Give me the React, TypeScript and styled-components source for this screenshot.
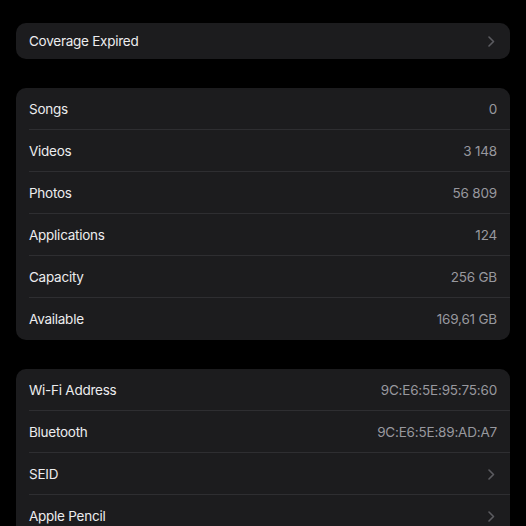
import styled, { createGlobalStyle } from "styled-components";

const Global = createGlobalStyle`
  body {
    margin: 0;
    background: #000;
    font-family: Inter, "Liberation Sans", sans-serif;
    -webkit-font-smoothing: antialiased;
  }
`;

const Page = styled.div`
  width: 526px;
  height: 526px;
  overflow: hidden;
  background: #000;
  padding: 23px 16px 0 16px;
  box-sizing: border-box;
  display: flex;
  flex-direction: column;
  gap: 29px;
`;

const Card = styled.div`
  background: #1c1c1e;
  border-radius: 10px;
  overflow: hidden;
  flex-shrink: 0;
`;

const Row = styled.div<{ $h?: number }>`
  height: ${(p) => p.$h ?? 42}px;
  display: flex;
  align-items: center;
  justify-content: space-between;
  padding-left: 13px;
  position: relative;
  &:not(:last-child)::after {
    content: "";
    position: absolute;
    left: 13px;
    right: 0;
    bottom: 0;
    height: 1px;
    background: #2e2e31;
  }
`;

const Label = styled.span`
  color: #ececee;
  font-size: 13.5px;
  letter-spacing: -0.25px;
  margin-top: -1px;
`;

const Value = styled.span`
  color: #98989e;
  font-size: 13.5px;
  padding-right: 13px;
  letter-spacing: -0.2px;
  margin-top: -1px;
`;

const Chevron = styled.svg`
  width: 7px;
  height: 11px;
  margin-right: 15px;
`;

function Arrow() {
  return (
    <Chevron viewBox="0 0 7 11">
      <path
        d="M1 1l4.5 4.5L1 10"
        fill="none"
        stroke="#5b5b60"
        strokeWidth="1.6"
        strokeLinecap="round"
        strokeLinejoin="round"
      />
    </Chevron>
  );
}

interface IItem {
  label: string;
  value?: string;
}

const stats: IItem[] = [
  { label: "Songs", value: "0" },
  { label: "Videos", value: "3 148" },
  { label: "Photos", value: "56 809" },
  { label: "Applications", value: "124" },
  { label: "Capacity", value: "256 GB" },
  { label: "Available", value: "169,61 GB" },
];

const network: IItem[] = [
  { label: "Wi-Fi Address", value: "9C:E6:5E:95:75:60" },
  { label: "Bluetooth", value: "9C:E6:5E:89:AD:A7" },
  { label: "SEID" },
  { label: "Apple Pencil" },
];

function Rows({ items }: { items: IItem[] }) {
  return (
    <>
      {items.map((item) => (
        <Row key={item.label}>
          <Label>{item.label}</Label>
          {item.value !== undefined ? <Value>{item.value}</Value> : <Arrow />}
        </Row>
      ))}
    </>
  );
}

export default function App() {
  return (
    <>
      <Global />
      <Page>
        <Card>
          <Row $h={36}>
            <Label>Coverage Expired</Label>
            <Arrow />
          </Row>
        </Card>
        <Card>
          <Rows items={stats} />
        </Card>
        <Card>
          <Rows items={network} />
        </Card>
      </Page>
    </>
  );
}
